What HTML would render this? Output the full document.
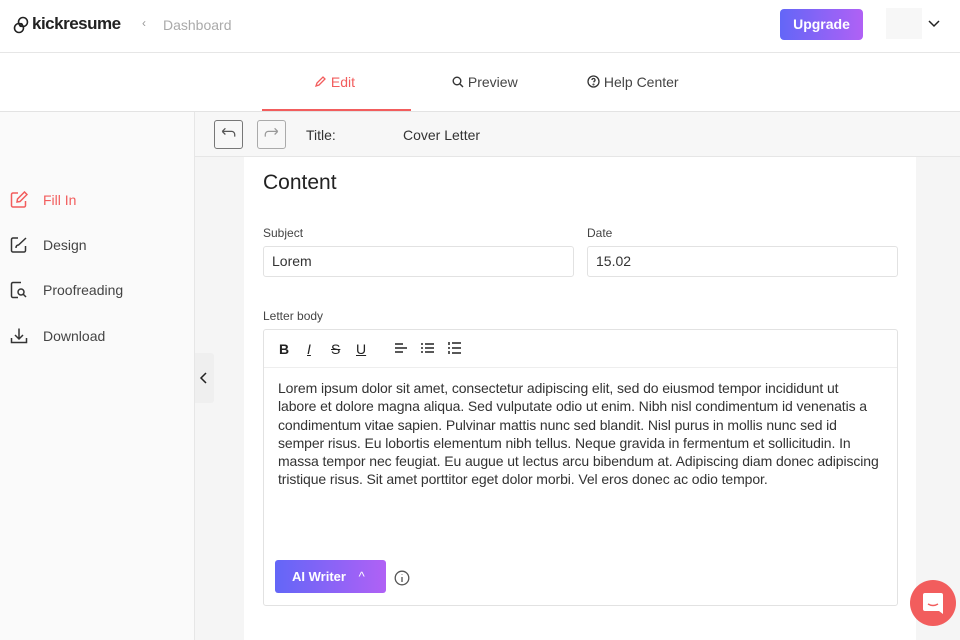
<!DOCTYPE html>
<html><head><meta charset="utf-8"><style>
*{box-sizing:border-box;margin:0;padding:0}
body{width:960px;height:640px;overflow:hidden;font-family:"Liberation Sans",sans-serif;background:#f5f5f5;position:relative;color:#333}
.abs{position:absolute}
.hdr{left:0;top:0;width:960px;height:53px;background:#fff;border-bottom:1px solid #e6e6e6}
.tabs{left:0;top:53px;width:960px;height:59px;background:#fff;border-bottom:1px solid #e3e3e3}
.tab{top:0;height:59px;line-height:59px;font-size:14px;color:#444}
.side{left:0;top:112px;width:195px;height:528px;background:#fafafa;border-right:1px solid #e6e6e6}
.item{left:10px;font-size:14px;color:#444;display:flex;align-items:center;gap:9px}
.titlebar{left:195px;top:112px;width:765px;height:45px;background:#f7f7f7;border-bottom:1px solid #e6e6e6}
.card{left:244px;top:157px;width:672px;height:483px;background:#fff}
.lbl{font-size:12px;color:#444}
.inp{border:1px solid #e2e2e2;border-radius:3px;height:31px;font-size:14px;padding:0 8px;line-height:29px;color:#333}
</style></head><body>
<div class="abs hdr">
 <svg class="abs" style="left:12px;top:16px" width="18" height="18" viewBox="0 0 18 18" fill="none" stroke="#222" stroke-width="1.6"><circle cx="11" cy="6" r="4.5"/><circle cx="7" cy="12" r="4.5"/><circle cx="9" cy="9" r="1.3"/></svg>
 <div class="abs" style="left:32px;top:14px;font-size:17px;font-weight:bold;color:#222;letter-spacing:-0.5px">kickresume</div>
 <div class="abs" style="left:142px;top:16px;font-size:12px;color:#999">‹</div>
 <div class="abs" style="left:163px;top:17px;font-size:14px;color:#aaa">Dashboard</div>
 <div class="abs" style="left:780px;top:9px;width:83px;height:31px;border-radius:4px;background:linear-gradient(90deg,#6366f7,#b061f5);color:#fff;font-weight:bold;font-size:14px;text-align:center;line-height:31px">Upgrade</div>
 <div class="abs" style="left:886px;top:8px;width:36px;height:31px;background:#f7f7f7"></div>
 <svg class="abs" style="left:927px;top:18px" width="14" height="10" viewBox="0 0 14 10" fill="none" stroke="#222" stroke-width="1.5"><path d="M2 3l5 5 5-5"/></svg>
</div>
<div class="abs tabs">
 <div class="abs" style="left:262px;top:56px;width:149px;height:2px;background:#f25d5d"></div>
 <div class="abs tab" style="left:314px;color:#f25d5d"><svg width="13" height="13" viewBox="0 0 13 13" fill="none" stroke="#f25d5d" stroke-width="1.3" style="vertical-align:-1px"><path d="M2 11l1-3 6-6 2 2-6 6z"/></svg> Edit</div>
 <div class="abs tab" style="left:452px"><svg width="12" height="12" viewBox="0 0 12 12" fill="none" stroke="#333" stroke-width="1.4" style="vertical-align:-1px"><circle cx="5" cy="5" r="3.8"/><path d="M8 8l3 3"/></svg> Preview</div>
 <div class="abs tab" style="left:587px"><svg width="13" height="13" viewBox="0 0 13 13" fill="none" stroke="#333" stroke-width="1.3" style="vertical-align:-1px"><circle cx="6.5" cy="6.5" r="5.5"/><path d="M5 5a1.5 1.5 0 1 1 2 1.4v1"/><circle cx="6.5" cy="9.5" r=".4"/></svg> Help Center</div>
</div>
<div class="abs side">
 <div class="abs item" style="top:79px;color:#f25d5d"><svg width="18" height="18" viewBox="0 0 18 18" fill="none" stroke="#f25d5d" stroke-width="1.5"><path d="M8 2H3a1.5 1.5 0 0 0-1.5 1.5v11A1.5 1.5 0 0 0 3 16h11a1.5 1.5 0 0 0 1.5-1.5V10"/><path d="M7 11l.5-3 7-7 2.5 2.5-7 7z"/></svg><span style="margin-left:6px">Fill In</span></div>
 <div class="abs item" style="top:124px"><svg width="18" height="18" viewBox="0 0 18 18" fill="none" stroke="#333" stroke-width="1.5"><path d="M8 2H3a1.5 1.5 0 0 0-1.5 1.5v11A1.5 1.5 0 0 0 3 16h11a1.5 1.5 0 0 0 1.5-1.5V10"/><path d="M6 12c0-2 1-3 2.5-3L16 2"/></svg><span style="margin-left:6px">Design</span></div>
 <div class="abs item" style="top:169px"><svg width="18" height="18" viewBox="0 0 18 18" fill="none" stroke="#333" stroke-width="1.5"><path d="M11 1.5H3a1.5 1.5 0 0 0-1.5 1.5v12A1.5 1.5 0 0 0 3 16.5h5"/><circle cx="11" cy="11" r="3"/><path d="M13 13l3 3"/></svg><span style="margin-left:6px">Proofreading</span></div>
 <div class="abs item" style="top:215px"><svg width="18" height="18" viewBox="0 0 18 18" fill="none" stroke="#333" stroke-width="1.5"><path d="M1.5 11v4.5h15V11"/><path d="M9 1.5v10M5 8l4 4 4-4"/></svg><span style="margin-left:6px">Download</span></div>
</div>
<div class="abs" style="left:195px;top:353px;width:19px;height:50px;background:#efefef;border-radius:0 3px 3px 0"><svg class="abs" style="left:4px;top:18px" width="10" height="14" viewBox="0 0 10 14" fill="none" stroke="#222" stroke-width="1.5"><path d="M7 2L2 7l5 5"/></svg></div>
<div class="abs titlebar">
 <div class="abs" style="left:19px;top:8px;width:29px;height:29px;border:1px solid #777;border-radius:3px"><svg width="27" height="27" viewBox="0 0 26 26" fill="none" stroke="#555" stroke-width="1.2"><path d="M7 10h9a3 3 0 0 1 3 3v2M7 10l3-3M7 10l3 3"/></svg></div>
 <div class="abs" style="left:62px;top:8px;width:29px;height:29px;border:1px solid #aaa;border-radius:3px"><svg width="27" height="27" viewBox="0 0 26 26" fill="none" stroke="#999" stroke-width="1.2"><path d="M19 10h-9a3 3 0 0 0-3 3v2M19 10l-3-3M19 10l-3 3"/></svg></div>
 <div class="abs" style="left:111px;top:15px;font-size:14px;color:#333">Title:</div>
 <div class="abs" style="left:208px;top:15px;font-size:14px;color:#333">Cover Letter</div>
</div>
<div class="abs card">
 <div class="abs" style="left:19px;top:14px;font-size:21px;color:#222">Content</div>
 <div class="abs lbl" style="left:19px;top:69px">Subject</div>
 <div class="abs inp" style="left:19px;top:89px;width:311px">Lorem</div>
 <div class="abs lbl" style="left:343px;top:69px">Date</div>
 <div class="abs inp" style="left:343px;top:89px;width:311px">15.02</div>
 <div class="abs lbl" style="left:19px;top:152px">Letter body</div>
 <div class="abs" style="left:19px;top:172px;width:635px;height:277px;border:1px solid #e2e2e2;border-radius:3px">
  <div style="height:38px;border-bottom:1px solid #eee;position:relative;font-size:14px;color:#222">
   <span class="abs" style="left:15px;top:11px;font-weight:bold">B</span>
   <span class="abs" style="left:43px;top:11px;font-style:italic;text-decoration:underline">I</span>
   <span class="abs" style="left:67px;top:11px;text-decoration:line-through">S</span>
   <span class="abs" style="left:92px;top:11px;text-decoration:underline">U</span>
   <svg class="abs" style="left:130px;top:12px" width="14" height="13" stroke="#222" stroke-width="1.5"><path d="M1 2h8M1 6h12M1 10h8"/></svg>
   <svg class="abs" style="left:156px;top:12px" width="15" height="13" stroke="#222" stroke-width="1.5"><path d="M1 2h2M5 2h9M1 6h2M5 6h9M1 10h2M5 10h9"/></svg>
   <svg class="abs" style="left:183px;top:11px" width="15" height="14" stroke="#222" stroke-width="1.5"><path d="M2 1v3M2 6v2M2 10v3M5 2h9M5 7h9M5 12h9"/></svg>
  </div>
  <div style="padding:11px 14px 0 14px;font-size:14px;line-height:18.3px;color:#333;letter-spacing:-0.1px;white-space:nowrap">Lorem ipsum dolor sit amet, consectetur adipiscing elit, sed do eiusmod tempor incididunt ut<br>labore et dolore magna aliqua. Sed vulputate odio ut enim. Nibh nisl condimentum id venenatis a<br>condimentum vitae sapien. Pulvinar mattis nunc sed blandit. Nisl purus in mollis nunc sed id<br>semper risus. Eu lobortis elementum nibh tellus. Neque gravida in fermentum et sollicitudin. In<br>massa tempor nec feugiat. Eu augue ut lectus arcu bibendum at. Adipiscing diam donec adipiscing<br>tristique risus. Sit amet porttitor eget dolor morbi. Vel eros donec ac odio tempor.</div>
  <div class="abs" style="left:11px;top:230px;width:111px;height:33px;border-radius:3px;background:linear-gradient(90deg,#6366f7,#b061f5);color:#fff;font-weight:bold;font-size:13px;line-height:33px;padding-left:17px">AI Writer <span style="margin-left:9px;font-weight:normal">^</span></div>
  <svg class="abs" style="left:130px;top:240px" width="16" height="16" fill="none" stroke="#555" stroke-width="1.3"><circle cx="8" cy="8" r="6.8"/><path d="M8 7v5M8 4.5v.5"/></svg>
 </div>
</div>
<div class="abs" style="left:910px;top:580px;width:46px;height:46px;border-radius:50%;background:#f25d5d"><svg class="abs" style="left:12px;top:12px" width="22" height="23" viewBox="0 0 22 23" fill="#fff"><path d="M3 1h16a2 2 0 0 1 2 2v19l-4-3H3a2 2 0 0 1-2-2V3a2 2 0 0 1 2-2z"/><path d="M6 12q5 3 10 0" stroke="#f25d5d" stroke-width="1.4" fill="none"/></svg></div>
</body></html>
